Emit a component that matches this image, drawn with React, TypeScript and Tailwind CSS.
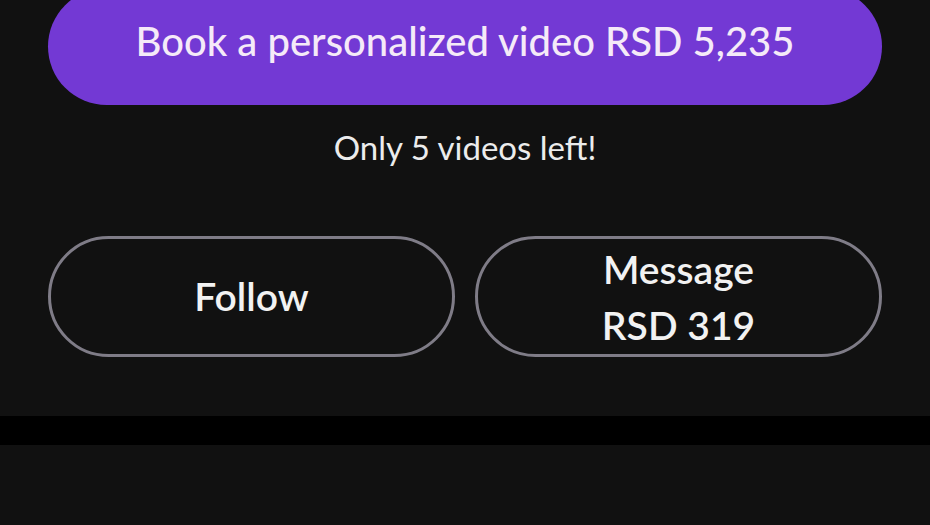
import React from "react";

export default function App() {
  return (
    <div
      className="w-[930px] h-[525px] overflow-hidden bg-[#111111] flex flex-col"
      style={{ fontFamily: "Lato, 'Open Sans', sans-serif" }}
    >
      <div className="mx-[48px] -mt-[12px] h-[117px] shrink-0 rounded-full bg-[#7339d4] flex items-center justify-center pb-[12px]">
        <span className="text-[40px] font-medium text-[#f5eaf8] leading-none">
          Book a personalized video RSD 5,235
        </span>
      </div>

      <div className="mt-[22px] text-center text-[33px] text-[#ececec] leading-[40px]">
        Only 5 videos left!
      </div>

      <div className="mt-[69px] mx-[48px] flex gap-[20px] shrink-0">
        <button className="flex-1 h-[121px] rounded-full border-[3px] border-[#7f7c87] flex items-center justify-center text-[39px] font-semibold text-[#f2f2f2] leading-none">
          Follow
        </button>
        <button className="flex-1 h-[121px] rounded-full border-[3px] border-[#7f7c87] flex flex-col items-center justify-center text-[39px] font-semibold text-[#f2f2f2] leading-[56px]">
          <span>Message</span>
          <span>RSD 319</span>
        </button>
      </div>

      <div className="mt-[59px] h-[29px] bg-black shrink-0" />
      <div className="flex-1 bg-[#111111]" />
    </div>
  );
}
